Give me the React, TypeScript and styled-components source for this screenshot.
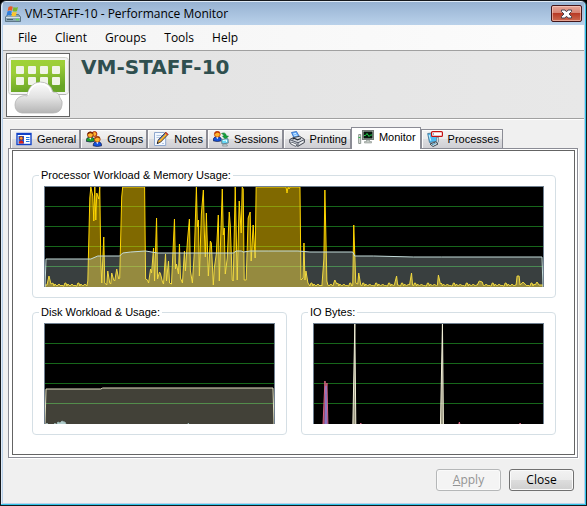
import React, { ReactNode } from "react";
import styled, { createGlobalStyle } from "styled-components";

const uiFont = `"Open Sans", "Noto Sans", sans-serif`;
const panelFont = `"Liberation Sans", Arial, sans-serif`;

const GlobalStyle = createGlobalStyle`
  * { box-sizing: border-box; }
  html, body { margin: 0; background: #000; }
  button { margin: 0; padding: 0; }
`;

const Window = styled.div`
  min-height: 100vh;
  display: flex;
  flex-direction: column;
  background: #b9d1ea;
  border: 1px solid #15181c;
  border-radius: 6px 6px 0 0;
  box-shadow: inset -1px -1px 0 #2fc4e8, inset 1px 1px 0 #dfeaf6;
  padding: 1px 2px 2px;
  overflow: hidden;
  font-family: ${uiFont};
  font-size: 12px;
  color: #000;
`;

const TitleBar = styled.header`
  display: flex;
  align-items: center;
  gap: 4px;
  height: 23px;
  padding: 0 2px 0;
  background: linear-gradient(#97b2d2, #b9d1ea);
`;

const Title = styled.h1`
  flex: 1;
  margin: 0;
  font-size: 12px;
  line-height: 18px;
  font-weight: 400;
  white-space: nowrap;
`;

const CloseBox = styled.button`
  display: flex;
  align-items: center;
  justify-content: center;
  width: 31px;
  height: 17px;
  border: 1px solid #43161a;
  border-radius: 2px;
  background: linear-gradient(#e8a698 0, #d78474 45%, #b83a26 50%, #cd6a50 100%);
  box-shadow: inset 0 0 0 1px rgba(255, 215, 205, 0.55);
`;

const MenuBar = styled.nav`
  display: flex;
  align-items: center;
  height: 25px;
  padding-left: 6px;
  background: linear-gradient(90deg, #f4f4f4, #fcfcfc);
`;

const MenuItem = styled.button`
  padding: 0 9px;
  border: 0;
  background: none;
  font: 12px/18px ${uiFont};
  color: #000;
`;

const Banner = styled.section`
  display: flex;
  gap: 11px;
  padding: 2px 3px 1px;
  border-top: 1px solid #a0a0a0;
  border-bottom: 1px solid #a0a0a0;
  background: linear-gradient(90deg, #e2e2e2, #e8e8e8);
`;

const Picture = styled.div`
  width: 64px;
  height: 64px;
  border: 1px solid #646464;
  background: #fff;
`;

const HostName = styled.h2`
  margin: 2px 0 0;
  font: bold 20px/24px "DejaVu Sans", Verdana, sans-serif;
  color: #2f4f4f;
`;

const Body = styled.main`
  flex: 1;
  display: flex;
  flex-direction: column;
  padding: 7px 6px 12px 5px;
  border-top: 1px solid #fff;
  background: #f0f0f0;
`;

const TabList = styled.div`
  display: flex;
  align-items: flex-end;
  padding-left: 2px;
`;

const Tab = styled.button<{ $active?: boolean }>`
  display: flex;
  align-items: center;
  gap: 5px;
  height: ${(p) => (p.$active ? 22 : 19)}px;
  margin-bottom: ${(p) => (p.$active ? -1 : 0)}px;
  padding: ${(p) => (p.$active ? "0 4px 3px 6px" : "0 3px 0 5px")};
  position: relative;
  border: 1px solid #8b8c95;
  border-bottom: 0;
  z-index: ${(p) => (p.$active ? 1 : 0)};
  background: ${(p) =>
    p.$active ? "#fff" : "linear-gradient(#f3f3f3 0, #ebebeb 48%, #dddde0 52%, #cfcfd4 100%)"};
  box-shadow: ${(p) => (p.$active ? "none" : "inset 1px 1px 0 #fcfcfc")};
  font: 11px/14px ${panelFont};
  color: #000;
  white-space: nowrap;
`;

const TabPage = styled.section`
  flex: 1;
  display: flex;
  flex-direction: column;
  padding: 1px 2px 2px 3px;
  border: 1px solid #8b8c95;
  background: #fff;
  box-shadow: 1px 1px 0 #fff;
`;

const Sheet = styled.div`
  flex: 1;
  display: flex;
  flex-direction: column;
  gap: 8px;
  padding: 18px 18px 19px 19px;
  border: 1px solid #646464;
`;

const Pair = styled.div`
  display: grid;
  grid-template-columns: 1fr 1fr;
  gap: 14px;
`;

const Group = styled.fieldset`
  min-width: 0;
  margin: 0;
  padding: 4px 11px 10px;
  border: 1px solid #d5dfe5;
  border-radius: 4px;
`;

const Legend = styled.legend`
  margin-left: -5px;
  padding: 0 2px;
  font: 11px/13px ${panelFont};
`;

const Plot = styled.svg`
  display: block;
  width: 100%;
  height: 101px;
  border: 1px solid #708090;
  border-bottom: 0;
  background: #000;
`;

const Footer = styled.footer`
  display: flex;
  justify-content: flex-end;
  gap: 8px;
  padding: 11px 4px 0;
`;

const PushButton = styled.button`
  width: 65px;
  height: 22px;
  border: 1px solid #707070;
  border-radius: 3px;
  background: linear-gradient(#f2f2f2 0, #ebebeb 48%, #dddddd 52%, #cfcfcf 100%);
  box-shadow: inset 0 0 0 1px #fafafa;
  font: 12px/18px ${uiFont};
  color: #000;
  &:disabled {
    border-color: #b5b7b8;
    background: #f4f4f4;
    color: #939393;
  }
`;

/* ---------- icons ---------- */

const Icon16 = ({ children }: { children: ReactNode }) => (
  <svg width="16" height="16" viewBox="0 0 16 16" aria-hidden="true">
    {children}
  </svg>
);

const AppIcon = () => (
  <Icon16>
    <path d="M.5 11 3 8.500h10.500L15.500 11v4.500H.5z" fill="#8ba6b5" stroke="#4c6675" strokeWidth=".8" />
    <path d="M1 11.500h14" stroke="#d5e2ea" />
    <path d="M2 13.500h6" stroke="#46606e" />
    <rect x="11" y="12.800" width="3" height="1.500" fill="#66df50" />
    <path d="M3.500 1q2.200-1.500 4.300-.3L6.900 4.700q-2.200-1.200-4.300.2z" fill="#ea5a22" />
    <path d="M8.500 1q2.200 1.200 4.500 0L12 5q-2.200 1.200-4.400 0z" fill="#77b82c" />
    <path d="M2.400 5.600q2.200-1.400 4.400-.2L5.900 9.500q-2.200-1.200-4.400.2z" fill="#2f7fdc" />
    <path d="M7.400 5.700q2.200 1.200 4.400 0L10.900 9.800q-2.200 1.200-4.400 0z" fill="#fbc62d" />
  </Icon16>
);

const GeneralIcon = () => (
  <Icon16>
    <rect x="1" y="2.500" width="14" height="11" fill="#fff" stroke="#1243c8" strokeWidth="1.400" />
    <rect x="1" y="2" width="14" height="2" fill="#1243c8" />
    <rect x="2.500" y="5" width="5.500" height="7.500" fill="#1c55d8" />
    <circle cx="5.200" cy="7.200" r="1.800" fill="#f59a38" stroke="#8c1d10" strokeWidth=".7" />
    <path d="M2.800 12.500q0-3 2.400-3t2.400 3z" fill="#d8241b" />
    <path d="M10 6.500h3.500M10 8.500h3.500M10 10.500h3.500" stroke="#1f75dd" />
  </Icon16>
);

const Person = ({ x, y, body, hair }: { x: number; y: number; body: string; hair: string }) => (
  <g transform={`translate(${x} ${y})`}>
    <path d="M.2 9.800Q0 5.600 4.300 5.600T8.600 9.800Q4.300 11.200.2 9.800z" fill={body} stroke="#101a45" strokeWidth=".7" />
    <circle cx="4.300" cy="3.300" r="2.900" fill="#ffb52c" stroke={hair} strokeWidth=".8" />
    <path d="M1.400 3Q1.500.4 4.300.3T7.300 2.300Q5 2.400 4 1.600 3 2.700 1.400 3z" fill={hair} />
    <path d="M3.200 6.200 4.300 8.300 5.400 6.200z" fill="#fff" />
  </g>
);

const GroupsIcon = () => (
  <Icon16>
    <circle cx="8.500" cy="3" r="2.400" fill="#ffb02c" stroke="#a52009" />
    <Person x={0} y={0.5} body="#1f9d2e" hair="#7c2409" />
    <Person x={7} y={5} body="#1552dc" hair="#a13b0a" />
  </Icon16>
);

const NotesIcon = () => (
  <Icon16>
    <path d="M1.500 1.500h9.700l1.500 1.500v11.500H1.500z" fill="#f2f8ff" stroke="#8fa8ce" />
    <path d="M3.500 4.500h6M3.500 6.500h4M9 12.500h2" stroke="#b4c8e3" />
    <path d="M4.200 12.500 5.200 9 12.700 1.200 15 3.500 7.500 11.200z" fill="#f5b42f" stroke="#372f39" strokeWidth=".9" />
    <path d="M12 2 12.900 1 15.200 3.400 14.300 4.300z" fill="#d52c23" />
    <path d="M5.600 9.300 12 2.800" stroke="#3d68c2" />
    <path d="M4 12.700 4.500 11l1.200 1.200z" fill="#111" />
  </Icon16>
);

const SessionsIcon = () => (
  <Icon16>
    <Person x={0} y={0} body="#1552dc" hair="#bd3a0c" />
    <path d="M8.500 2.500q4-2 5 2.500H15.500L12.500 8.500 9.500 5h1.600Q10.500 3 8.500 2.500z" fill="#15a13a" stroke="#08722a" strokeWidth=".5" />
    <path d="M8.500 8.500 15 7.700 15.300 12 9 13z" fill="#66d9f8" stroke="#65838f" />
    <path d="M10 9.500 13.500 9v2" fill="none" stroke="#dcffff" />
    <path d="M10.500 13.200h3l1 1.800h-5z" fill="#d1dadd" stroke="#6d7b80" strokeWidth=".6" />
  </Icon16>
);

const PrintingIcon = () => (
  <Icon16>
    <path d="M2.500 1.500 7.500.5 10.500 6 5.500 8z" fill="#6db4ff" stroke="#235fbd" strokeWidth=".8" />
    <path d="M4.300 3 7 2.400M5.200 4.700l3-.7" stroke="#e0f3ff" strokeWidth=".9" />
    <path d="M.7 8.500 4.500 6.500 10.500 5.300 15.400 8.300v3.200L9 15.300.7 11.700z" fill="#d4d8de" stroke="#353a43" strokeWidth=".9" />
    <path d="M1 8.700 9 11.800 15.200 8.600M9 11.800V15" fill="none" stroke="#535966" />
    <path d="M3.500 8.300 5 7.300 8.500 8.800 12 7.500" fill="none" stroke="#252a34" strokeWidth="1.200" />
    <path d="M3 11.200 8 13.400 6.700 15.400 1.500 12.800z" fill="#fff" stroke="#454c59" strokeWidth=".8" />
    <path d="M11 12.200 14 10.700" stroke="#f6f6f6" />
  </Icon16>
);

const MonitorIcon = () => (
  <Icon16>
    <path d="M.7 5.500h2v9h-2z" fill="#e3e6e1" stroke="#8b958f" />
    <path d="M.5 8.500h2" stroke="#25b443" />
    <rect x="4.500" y="1.500" width="11" height="9" fill="#c6ccc7" stroke="#767d78" />
    <rect x="5.500" y="2.500" width="9" height="7" fill="#06170c" />
    <path d="M6 6.500h1.500L9 4.500l2 3 1.500-1.500H14" fill="none" stroke="#20d94a" />
    <path d="M8.500 11h3v1.500h2V14H6.500v-1.500h2z" fill="#c3cac5" stroke="#79827d" strokeWidth=".5" />
  </Icon16>
);

const ProcessesIcon = () => (
  <Icon16>
    <path d="M.7 2.500 9.500 1.500 11 10 2.500 11.500z" fill="#4dbcf4" stroke="#52809f" />
    <path d="M2.200 4 3.700 9.700" stroke="#d2f5ff" />
    <path d="M9.500 6.500 11.500 6v5L9.500 12z" fill="#d3d8dd" stroke="#5f7280" strokeWidth=".6" />
    <path d="M3 13 8.500 11l2.500 2-5 2.500z" fill="#edf2f5" stroke="#354651" />
    <path d="M5 13.500 8.500 12.500" stroke="#2f8bb7" />
    <rect x="4.600" y=".6" width="10.800" height="4.800" rx="1" fill="#fff" stroke="#c41212" strokeWidth="1.200" />
    <path d="M6.500 2v2" stroke="#9aa5c5" />
  </Icon16>
);

const CloudScreen = () => (
  <svg width="62" height="62" viewBox="0 0 62 62" aria-hidden="true">
    <defs>
      <linearGradient id="screen" x1="0" y1="0" x2=".3" y2="1">
        <stop offset="0" stopColor="#a0d437" />
        <stop offset=".4" stopColor="#9ccd38" />
        <stop offset="1" stopColor="#68a527" />
      </linearGradient>
      <linearGradient id="cloud" x1="0" y1="0" x2="0" y2="1">
        <stop offset="0" stopColor="#fdfdfd" />
        <stop offset=".5" stopColor="#e2e2e2" />
        <stop offset="1" stopColor="#b5b5b5" />
      </linearGradient>
    </defs>
    <rect x="1.500" y="3.500" width="60" height="37" rx="3" fill="#f3f3f3" stroke="#d0d2cc" />
    <path d="M4 40.500h55" stroke="#b4b4b4" />
    <rect x="4" y="6" width="54" height="32" fill="url(#screen)" />
    {[9, 21, 33, 45].map((x) =>
      [13, 24].map((y) => (
        <rect key={`${x}-${y}`} x={x} y={y - 1} width="8" height="8" rx="1" fill="#f0f4e8" />
      ))
    )}
    <path
      d="M15 59Q8 58 8 51 8 44 15 42 18 41 20 42 22 29 33 28 43 28 46 38 52 38 53 44 56 47 55 51 54 59 46 59z"
      fill="url(#cloud)"
      stroke="#b4b4b4"
      strokeWidth=".8"
    />
    <path d="M21 41Q24 30 33 29.500 42 30 44 38" fill="none" stroke="#fff" strokeWidth="1.500" />
  </svg>
);

const CrossIcon = () => (
  <svg width="13" height="10" viewBox="0 0 13 10" aria-hidden="true">
    <path
      d="M1.500 1h3.500L6.500 2.800 8 1h3.500v1.500L9 5l2.500 2.500V9H8L6.500 7.200 5 9H1.500V7.500L4 5 1.500 2.500z"
      fill="#fff"
      stroke="#4b4650"
    />
  </svg>
);

/* ---------- chart data: "x,y" pairs, y measured down from 100% ---------- */

const quiet = (from: number, to: number) => {
  const heights = [98, 96, 99, 98, 99, 97, 99, 98, 99, 96, 98, 97, 99];
  const out: string[] = [];
  for (let x = from; x <= to; x += 1) out.push(`${x},${heights[(x * 5) % 13]}`);
  return out.join(" ");
};

const cpu = [
  "0,98 2,98 4,89 6,97",
  quiet(8, 42),
  "43,94 45,11 46,0 48,9 49,34 50,0 51,33 52,6 54,12 55,0 56,74 57,96 59,50 60,96 62,98 63,84 65,96 66,97 67,86 69,93 70,94 72,82 74,92 75,91 77,10 78,0 100,0 101,92 103,93 104,96 106,82 107,86 109,61 110,94 112,31 113,92 115,85 116,87 118,95 119,97 121,67 122,94 124,74 125,96 127,97 130,32 131,82 132,77 134,87 135,57 136,91 138,96 140,64 141,84 143,54 145,32 146,84 148,96 150,64 152,0 153,40 154,33 155,89 157,27 159,3 160,46 161,70 162,26 164,89 166,54 167,56 169,98 170,81 172,67 174,28 175,94 178,2 179,48 180,41 181,87 183,71 185,25 186,38 188,93 189,94 191,0 193,93 195,14 197,46 198,0 199,2 200,93 202,93 204,31 206,25 207,74 209,38 211,71 212,0 242,0 243,6 244,0 245,2 246,0 256,0 257,93 259,91 260,56 261,93 262,84 264,96",
  quiet(266, 278),
  "280,72 281,3 283,94",
  quiet(284, 289),
  "291,93 293,97",
  quiet(294, 308),
  "309,98 310,38 312,96 314,97 315,86 317,98",
  quiet(318, 350),
  "351,97 353,89 354,98",
  quiet(355, 365),
  "366,98 368,86 369,98",
  quiet(370, 393),
  "394,98 395,88 397,97",
  quiet(398, 433),
  "434,98 436,94 439,95",
  quiet(440, 472),
  "473,98 474,89 476,89 477,98 478,97 480,95",
  quiet(482, 492),
  "494,95 496,98 500,98",
].join(" ");

const memory =
  "0,100 1,72 46,72 53,69 75,69 78,66 86,65 101,64 113,66 189,66 192,64 197,64 199,65 206,64 224,64 254,64 266,65 309,65 311,69 330,69 370,70 398,70 499,70 500,100";

const disk = "0,100 1,65 56,65 58,64 229,64 230,100";
const diskActivity =
  "0,102 2,99 4,102 9,102 10,99 11,102 13,98 15,99 17,97 19,98 20,98 22,102 143,102 144,99 145,102 229,102";
const ioRead = "9,102 11,57 12,70 13,59 14,102 46,102 47,99 48,102 145,102 146,98 147,102 206,102 207,99 208,102";
const ioWrite = "11,102 12,62 13,102";
const ioTotal = "39,102 41,0 42,102 127,102 129,0 130,102";

const series = {
  cpu: { fill: "rgba(255,210,0,.5)", stroke: "#ffd500" },
  memory: { fill: "rgba(206,228,228,.28)", stroke: "#c4dcda" },
  disk: { fill: "rgba(255,250,215,.26)", stroke: "#e3e2c4" },
  activity: { fill: "#b0cccb", stroke: "#9eb9b7" },
  read: { fill: "rgba(219,90,125,.7)", stroke: "#d96483" },
  write: { fill: "#8a7ac8", stroke: "#8a7ac8" },
  total: { fill: "rgba(255,250,215,.6)", stroke: "#f1efd6" },
};

type Line = { kind: keyof typeof series; points: string };

const Chart = ({ label, width, lines }: { label: string; width: number; lines: Line[] }) => (
  <Plot viewBox={`0 0 ${width} 100`} preserveAspectRatio="none" role="img" aria-label={label}>
    {[20, 40, 60, 80].map((y) => (
      <path key={y} d={`M0 ${y - 0.5}H${width}`} stroke="#17671b" vectorEffect="non-scaling-stroke" />
    ))}
    {lines.map(({ kind, points }) => {
      const first = points.split(",")[0];
      const last = points.split(" ").pop()!.split(",")[0];
      return (
        <g key={kind}>
          <polygon points={`${first},102 ${points} ${last},102`} fill={series[kind].fill} />
          <polyline
            points={points}
            fill="none"
            stroke={series[kind].stroke}
            vectorEffect="non-scaling-stroke"
          />
        </g>
      );
    })}
  </Plot>
);

const tabs = [
  { name: "General", icon: <GeneralIcon /> },
  { name: "Groups", icon: <GroupsIcon /> },
  { name: "Notes", icon: <NotesIcon /> },
  { name: "Sessions", icon: <SessionsIcon /> },
  { name: "Printing", icon: <PrintingIcon /> },
  { name: "Monitor", icon: <MonitorIcon /> },
  { name: "Processes", icon: <ProcessesIcon /> },
];

export default function App() {
  return (
    <>
      <GlobalStyle />
      <Window>
        <TitleBar>
          <AppIcon />
          <Title>VM-STAFF-10 - Performance Monitor</Title>
          <CloseBox aria-label="Close window">
            <CrossIcon />
          </CloseBox>
        </TitleBar>
        <MenuBar>
          {["File", "Client", "Groups", "Tools", "Help"].map((m) => (
            <MenuItem key={m}>{m}</MenuItem>
          ))}
        </MenuBar>
        <Banner>
          <Picture>
            <CloudScreen />
          </Picture>
          <HostName>VM-STAFF-10</HostName>
        </Banner>
        <Body>
          <TabList role="tablist">
            {tabs.map((t) => (
              <Tab
                key={t.name}
                role="tab"
                aria-selected={t.name === "Monitor"}
                $active={t.name === "Monitor"}
              >
                {t.icon}
                {t.name}
              </Tab>
            ))}
          </TabList>
          <TabPage role="tabpanel" aria-label="Monitor">
            <Sheet>
              <Group>
                <Legend>Processor Workload &amp; Memory Usage:</Legend>
                <Chart
                  label="Processor workload and memory usage"
                  width={500}
                  lines={[
                    { kind: "cpu", points: cpu },
                    { kind: "memory", points: memory },
                  ]}
                />
              </Group>
              <Pair>
                <Group>
                  <Legend>Disk Workload &amp; Usage:</Legend>
                  <Chart
                    label="Disk workload and usage"
                    width={230}
                    lines={[
                      { kind: "disk", points: disk },
                      { kind: "activity", points: diskActivity },
                    ]}
                  />
                </Group>
                <Group>
                  <Legend>IO Bytes:</Legend>
                  <Chart
                    label="IO bytes"
                    width={230}
                    lines={[
                      { kind: "read", points: ioRead },
                      { kind: "write", points: ioWrite },
                      { kind: "total", points: ioTotal },
                    ]}
                  />
                </Group>
              </Pair>
            </Sheet>
          </TabPage>
          <Footer>
            <PushButton disabled>
              <u>A</u>pply
            </PushButton>
            <PushButton>Close</PushButton>
          </Footer>
        </Body>
      </Window>
    </>
  );
}
